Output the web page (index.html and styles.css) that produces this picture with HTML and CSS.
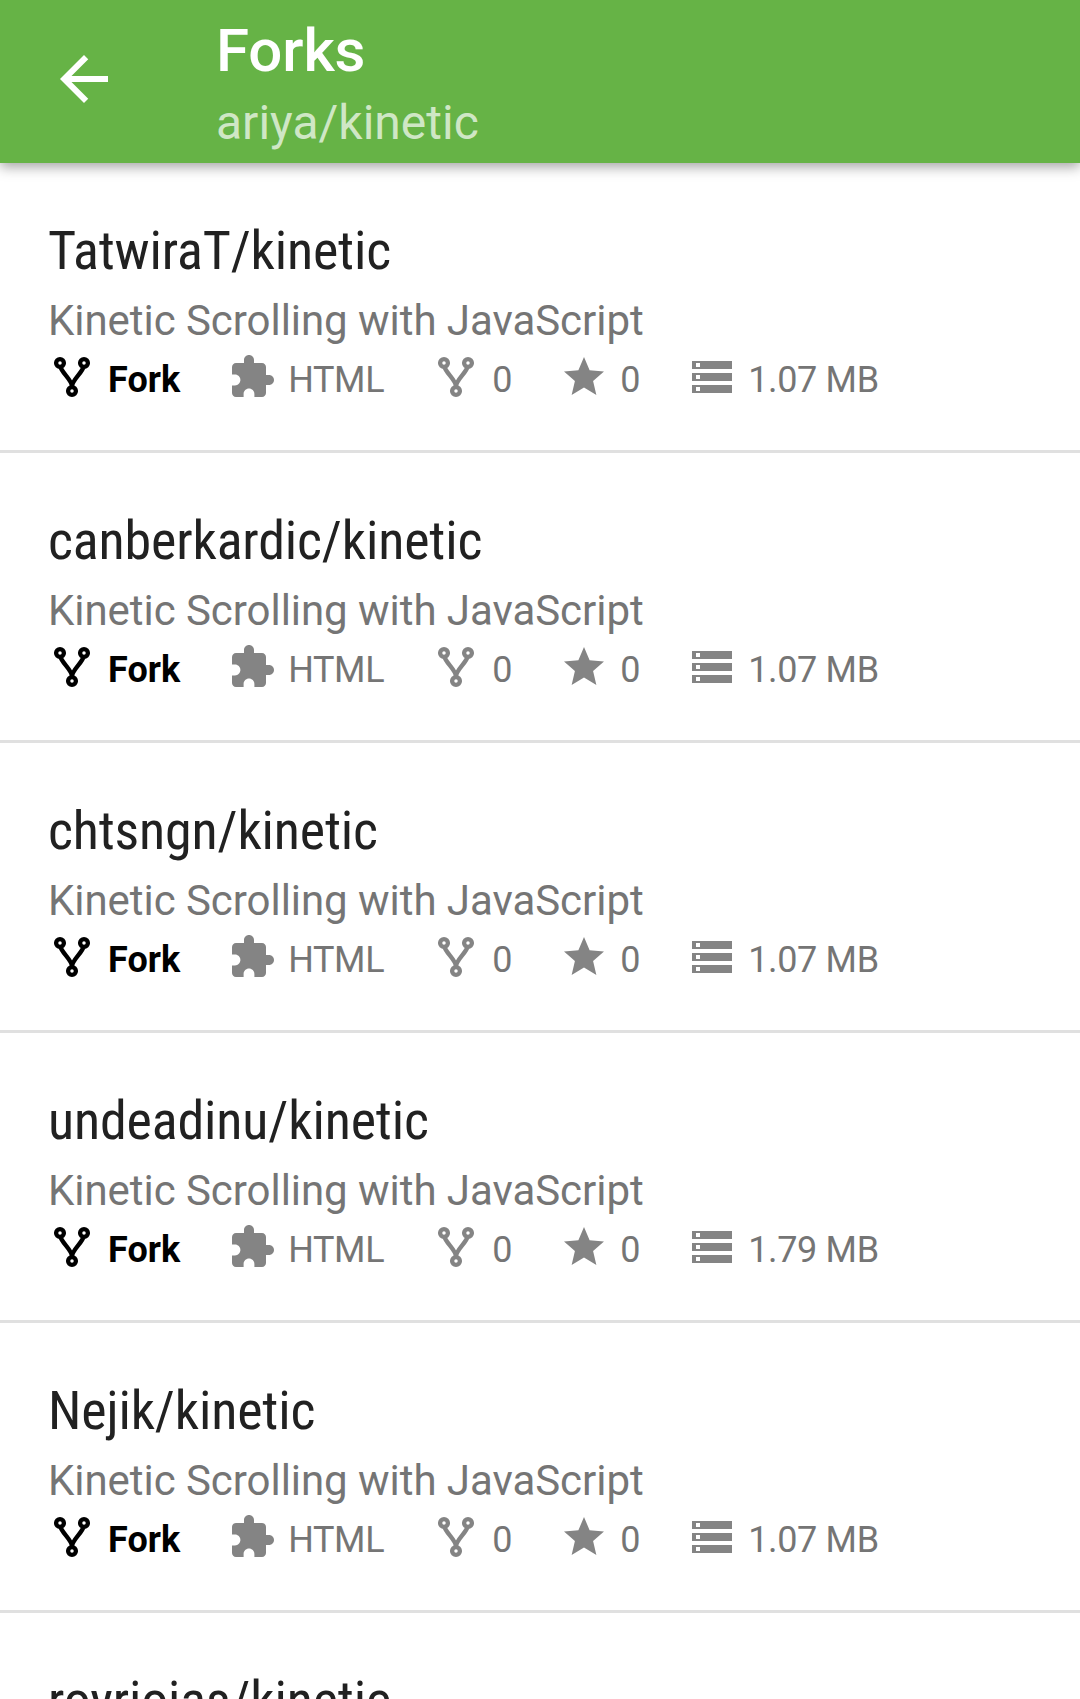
FILE: index.html
```html
<!DOCTYPE html>
<html lang="en">
<head>
<meta charset="utf-8">
<title>Forks</title>
<link rel="stylesheet" href="styles.css">
</head>
<body>
<svg class="sprite" aria-hidden="true">
  <symbol id="fork" viewBox="0 0 24 24">
    <g fill="none" stroke="currentColor" stroke-width="2.150">
      <circle cx="6" cy="5" r="1.950"/>
      <circle cx="18" cy="5" r="1.950"/>
      <circle cx="12" cy="19" r="1.950"/>
      <path d="M6.300 7C6.800 9.800 12 13.500 12 16.800C12 13.500 17.200 9.800 17.700 7"/>
    </g>
  </symbol>
  <symbol id="extension" viewBox="0 0 24 24"><path fill="currentColor" d="M20.500 11H19V7c0-1.100-.9-2-2-2h-4V3.500C13 2.120 11.880 1 10.500 1S8 2.120 8 3.500V5H4c-1.100 0-1.990.9-1.990 2v3.800H3.500c1.490 0 2.700 1.210 2.700 2.700s-1.210 2.700-2.700 2.700H2V20c0 1.100.9 2 2 2h3.800v-1.500c0-1.490 1.210-2.700 2.700-2.700s2.700 1.210 2.700 2.700V22H17c1.100 0 2-.9 2-2v-4h1.500c1.380 0 2.500-1.120 2.500-2.500S21.880 11 20.500 11z"/></symbol>
  <symbol id="star" viewBox="0 0 24 24"><path fill="currentColor" d="M12 17.270L18.180 21l-1.640-7.030L22 9.240l-7.190-.61L12 2 9.190 8.630 2 9.240l5.460 4.730L5.820 21z"/></symbol>
  <symbol id="storage" viewBox="0 0 24 24"><path fill="currentColor" d="M2 20h20v-4H2v4zm2-3h2v2H4v-2zM2 4v4h20V4H2zm4 3H4V5h2v2zm-4 7h20v-4H2v4zm2-3h2v2H4v-2z"/></symbol>
</svg>
<header class="toolbar">
  <svg class="back" viewBox="0 0 24 24"><path fill="currentColor" d="M20 11H7.830l5.590-5.590L12 4l-8 8 8 8 1.410-1.410L7.830 13H20v-2z"/></svg>
  <div class="heading">
    <h1 class="title">Forks</h1>
    <p class="subtitle">ariya/kinetic</p>
  </div>
</header>
<main class="list" id="list"></main>
<script src="list.js"></script>
</body>
</html>
```
FILE: styles.css
```css
body { margin: 0; height: 1699px; overflow: hidden; background: #fff; font-family: Roboto, sans-serif; }
.sprite { display: none; }
.toolbar { position: relative; display: flex; align-items: flex-start; box-sizing: border-box; height: 163px; padding: 0 48px; gap: 96px; background: #66b346; color: #fff; box-shadow: 0 4px 12px rgba(0,0,0,.36); }
.back { width: 72px; height: 72px; margin-top: 43px; }
.heading { padding-top: 15px; }
.title { margin: 0; font-size: 60px; font-weight: 500; line-height: 72px; letter-spacing: -.1px; }
.subtitle { margin: 0; font-size: 48px; line-height: 72px; color: rgba(255,255,255,.7); }
.list { height: 1536px; overflow: hidden; }
.repo { box-sizing: border-box; height: 290px; padding: 55px 48px 0; border-bottom: 3px solid #e0e0e0; }
.name { margin: 0; font-size: 54px; line-height: 66px; font-weight: 400; font-family: "Roboto Condensed", Roboto, sans-serif; font-stretch: 75%; letter-spacing: -.15px; color: #212121; white-space: nowrap; }
.description { margin: 7px 0 0; font-size: 42px; line-height: 60px; letter-spacing: -.05px; color: #757575; }
.meta { display: flex; gap: 48px; height: 48px; margin-top: 2px; color: #848484; font-size: 36px; line-height: 48px; }
.item { display: flex; gap: 12px; }
.item svg { width: 48px; height: 48px; }
.label { min-width: 20px; padding-top: 3px; letter-spacing: -.35px; color: #757575; }
.badge, .badge .label { color: #000; font-weight: 700; letter-spacing: 0; }
```
FILE: list.js
```js
const repos = [
  ["TatwiraT/kinetic", "1.07 MB"],
  ["canberkardic/kinetic", "1.07 MB"],
  ["chtsngn/kinetic", "1.07 MB"],
  ["undeadinu/kinetic", "1.79 MB"],
  ["Nejik/kinetic", "1.07 MB"],
  ["royriojas/kinetic", "1.07 MB"]
];
const item = (icon, text, extra = "") =>
  `<span class="item ${extra}"><svg><use href="#${icon}"/></svg><span class="label">${text}</span></span>`;
document.getElementById("list").innerHTML = repos.map(([name, size]) => `
  <article class="repo">
    <h2 class="name">${name}</h2>
    <p class="description">Kinetic Scrolling with JavaScript</p>
    <div class="meta">${item("fork", "Fork", "badge")}${item("extension", "HTML")}${item("fork", "0")}${item("star", "0")}${item("storage", size)}</div>
  </article>`).join("");
```
